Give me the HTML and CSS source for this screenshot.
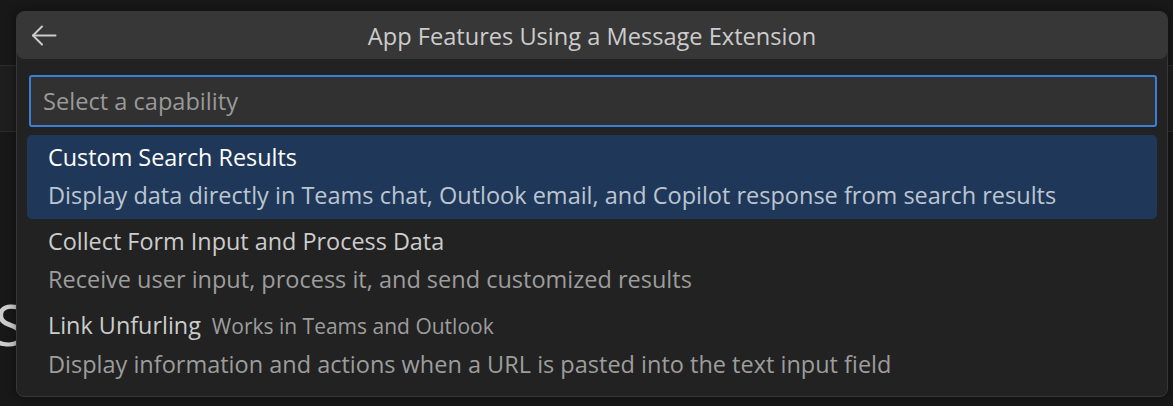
FILE: index.html
```html
<!DOCTYPE html>
<html lang="en">
<head>
<meta charset="utf-8">
<title>App Features Using a Message Extension</title>
<link rel="stylesheet" href="styles.css">
</head>
<body>
  <div class="page">
    <div class="band band-top"></div>
    <div class="band band-mid"></div>
    <div class="page-content">
      <h1 class="bg-heading">St</h1>
    </div>
  </div>

  <div class="quick-input">
    <div class="title-bar">
      <button class="back" aria-label="Back">
        <svg width="26" height="22" viewBox="0 0 26 22" fill="none" stroke="#cccccc" stroke-width="2" stroke-linecap="round" stroke-linejoin="round">
          <path d="M2 10.5H24.5"/>
          <path d="M11 1.5L2 10.5L11 19.5"/>
        </svg>
      </button>
      <div class="title">App Features Using a Message Extension</div>
      <div class="spacer"></div>
    </div>
    <div class="qi-body">
      <div class="input"><span class="placeholder">Select a capability</span></div>
      <div class="list">
        <div class="row selected">
          <div class="label">Custom Search Results</div>
          <div class="detail">Display data directly in Teams chat, Outlook email, and Copilot response from search results</div>
        </div>
        <div class="row">
          <div class="label">Collect Form Input and Process Data</div>
          <div class="detail">Receive user input, process it, and send customized results</div>
        </div>
        <div class="row">
          <div class="label">Link Unfurling<span class="desc">Works in Teams and Outlook</span></div>
          <div class="detail">Display information and actions when a URL is pasted into the text input field</div>
        </div>
      </div>
    </div>
  </div>
</body>
</html>
```

FILE: styles.css
```css
* { box-sizing: border-box; }

html, body {
  margin: 0;
  padding: 0;
  width: 1173px;
  height: 406px;
  overflow: hidden;
  background: #181818;
  font-family: "Open Sans", "Noto Sans", sans-serif;
}

.page {
  position: relative;
  height: 406px;
}

.band {
  border-bottom: 1px solid #2b2b2b;
}
.band-top {
  height: 66px;
  background: #181818;
}
.band-mid {
  height: 66px;
  background: #1e1e1e;
}

.page-content {
  padding: 162px 0 0 0;
}

.bg-heading {
  margin: 0 0 0 -5px;
  font-weight: 400;
  font-size: 56px;
  line-height: 60px;
  color: #cccccc;
}

.quick-input {
  position: absolute;
  left: 16px;
  top: 11px;
  width: 1152px;
  background: #222222;
  border: 1px solid #363636;
  border-radius: 8px;
  box-shadow: 0 0 8px rgba(0, 0, 0, 0.45);
  padding-bottom: 9px;
}

.title-bar {
  height: 47px;
  background: #373737;
  border-radius: 7px;
  display: grid;
  grid-template-columns: 1fr auto 1fr;
  align-items: center;
}

.back {
  justify-self: start;
  margin-left: 14px;
  padding: 0;
  border: 0;
  background: transparent;
  display: flex;
  width: 26px;
  height: 22px;
}

.title {
  color: #cccccc;
  font-size: 23.6px;
  line-height: 47px;
  padding-top: 1px;
}

.qi-body {
  padding: 16px 10px 0 10px;
}

.input {
  margin-left: 2px;
  height: 52px;
  background: #313131;
  border: 2px solid #3b7ed8;
  border-radius: 3px;
  padding: 0 12px;
  display: flex;
  align-items: center;
}

.placeholder {
  color: #999999;
  font-size: 23.6px;
}

.list {
  margin-top: 8px;
  display: flex;
  flex-direction: column;
}

.row {
  height: 84px;
  padding: 3px 21px 0;
  border-radius: 5px;
}

.row.selected {
  background: #1f3859;
}

.label {
  font-size: 23.4px;
  line-height: 38px;
  color: #cccccc;
  white-space: nowrap;
}

.row.selected .label {
  color: #ffffff;
}

.desc {
  margin-left: 11px;
  font-size: 21px;
  color: #9d9d9d;
}

.detail {
  font-size: 23.5px;
  line-height: 38px;
  color: #9d9d9d;
  white-space: nowrap;
}

.row.selected .detail {
  color: #bcc5d1;
}
```
